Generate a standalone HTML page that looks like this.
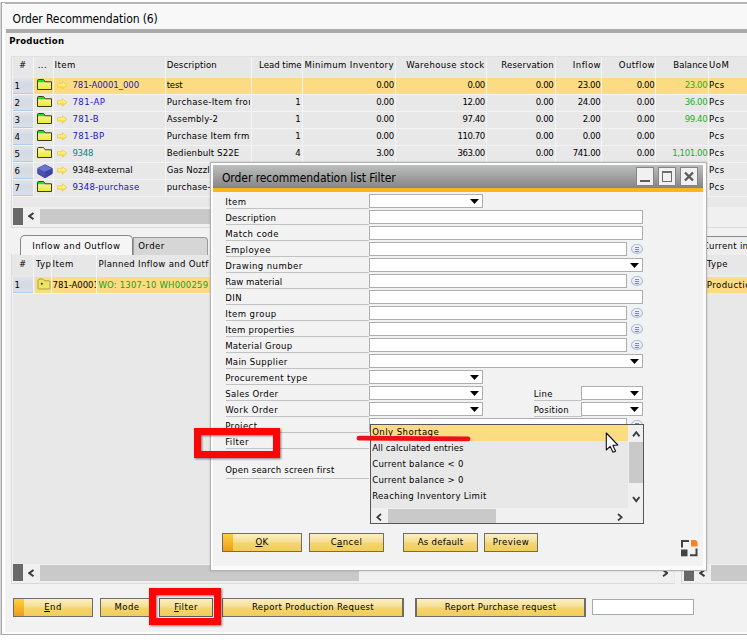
<!DOCTYPE html>
<html><head><meta charset="utf-8"><title>Order Recommendation</title>
<style>
html,body{margin:0;padding:0;background:#fff;}
body{width:747px;height:640px;position:relative;overflow:hidden;font-family:"DejaVu Sans Condensed","Liberation Sans",sans-serif;font-size:9.5px;color:#000;}
.a{position:absolute;box-sizing:border-box;}
.t{position:absolute;white-space:pre;}
.ic{position:absolute;}
.btn{position:absolute;height:19px;border:1px solid #6c6c6c;background:linear-gradient(#fdefc0 0%,#f5de92 47%,#f4d56e 53%,#f1cd5a 100%);box-sizing:border-box;}
.btn.def:before{content:"";position:absolute;left:0;top:0;bottom:0;width:10px;background:linear-gradient(#fcd23c,#f09a1c);}
.fld{position:absolute;height:14px;background:#fff;border:1px solid #adadad;box-sizing:border-box;}
.ul{position:absolute;height:1px;background:#c2c2c2;}
.dd{position:absolute;width:9px;height:5px;background:#000;clip-path:polygon(0 0,100% 0,50% 100%);}
.circ{position:absolute;width:12px;height:10px;border-radius:50%;border:1px solid #aebbdb;background:linear-gradient(#f6f8fd,#d6def1);box-sizing:border-box;}
.circ i{position:absolute;left:3px;right:3px;height:1px;background:#8a8a94;}
.num{position:absolute;width:21px;height:16px;background:linear-gradient(180deg,#e0e4ea,#d4d9e2 45%,#dadfe7);border-bottom:1px solid #aecbef;box-sizing:border-box;}
</style></head><body>
<svg width="0" height="0" style="position:absolute"><defs><linearGradient id="fg" x1="0" y1="0" x2="0" y2="1"><stop offset="0" stop-color="#f6f39a"/><stop offset="1" stop-color="#ecec28"/></linearGradient><linearGradient id="ag" x1="0" y1="0" x2="0" y2="1"><stop offset="0" stop-color="#fefc9e"/><stop offset="0.6" stop-color="#fbea62"/><stop offset="1" stop-color="#f0cc3c"/></linearGradient></defs></svg>

<div class="a" style="left:0px;top:0px;width:747px;height:640px;background:#fff;"></div>
<div class="a" style="left:0px;top:2px;width:760px;height:633px;background:#f2f2f2;border:1px solid #adadad;border-left:none;border-top:2px solid #b2b2b2;"></div>
<div class="a" style="left:0px;top:2px;width:2px;height:633px;background:#d6d6d6;border-right:1px solid #a8a8a8;"></div>
<div class="a" style="left:2px;top:3px;width:3px;height:631px;background:#ffffff;"></div>
<div class="a" style="left:2px;top:632px;width:745px;height:2px;background:#fcfcfc;"></div>
<div class="a" style="left:2px;top:4px;width:745px;height:25px;background:#f8f8f8;"></div>
<div class="a" style="left:2px;top:4px;width:745px;height:1px;background:#ffffff;"></div>
<div class="a" style="left:6px;top:29px;width:741px;height:4px;background:#ababab;"></div>
<div class="t" style="top:11.30px;line-height:16px;font-size:12px;letter-spacing:-0.101px;left:12.50px;">Order Recommendation (6)</div>
<div class="t" style="top:33.85px;line-height:14px;font-size:9.5px;letter-spacing:0.245px;font-weight:bold;left:9.20px;">Production</div>
<div class="a" style="left:11px;top:56px;width:740px;height:172px;background:#e8e8e8;border-left:1px solid #dadada;border-top:1px solid #e0e0e0;border-bottom:1px solid #dadada;"></div>
<div class="a" style="left:12px;top:57px;width:1px;height:170px;background:#f4f4f4;"></div>
<div class="a" style="left:13px;top:57px;width:734px;height:20px;background:#e7e7e7;"></div>
<div class="t" style="top:58.35px;line-height:14px;font-size:9.5px;letter-spacing:0.000px;left:18.91px;">#</div>
<div class="t" style="top:58.35px;line-height:14px;font-size:9.5px;letter-spacing:0.450px;left:37.70px;">...</div>
<div class="t" style="top:58.35px;line-height:14px;font-size:9.5px;letter-spacing:0.444px;left:54.50px;">Item</div>
<div class="t" style="top:58.35px;line-height:14px;font-size:9.5px;letter-spacing:0.136px;left:166.70px;">Description</div>
<div class="t" style="top:58.35px;line-height:14px;font-size:9.5px;letter-spacing:-0.006px;left:259.10px;">Lead time</div>
<div class="t" style="top:58.35px;line-height:14px;font-size:9.5px;letter-spacing:0.359px;left:304.60px;">Minimum Inventory</div>
<div class="t" style="top:58.35px;line-height:14px;font-size:9.5px;letter-spacing:0.362px;left:406.30px;">Warehouse stock</div>
<div class="t" style="top:58.35px;line-height:14px;font-size:9.5px;letter-spacing:0.173px;left:501.30px;">Reservation</div>
<div class="t" style="top:58.35px;line-height:14px;font-size:9.5px;letter-spacing:0.450px;left:572.80px;">Inflow</div>
<div class="t" style="top:58.35px;line-height:14px;font-size:9.5px;letter-spacing:0.450px;left:618.79px;">Outflow</div>
<div class="t" style="top:58.35px;line-height:14px;font-size:9.5px;letter-spacing:0.034px;left:673.30px;">Balance</div>
<div class="t" style="top:58.35px;line-height:14px;font-size:9.5px;letter-spacing:0.450px;left:709.00px;">UoM</div>
<div class="a" style="left:34px;top:78px;width:713px;height:16px;background:#fcdc82;"></div>
<div class="a" style="left:12px;top:94px;width:735px;height:1px;background:#f3f3f3;"></div>
<div class="num" style="left:13px;top:78px;"></div>
<div class="t" style="top:79.15px;line-height:14px;font-size:9.5px;letter-spacing:0.000px;left:14.40px;">1</div>
<svg class="ic" style="left:36px;top:78px" width="17" height="13" viewBox="0 0 17 13"><path d="M1.5 4 L1.5 2.6 Q1.5 1.5 2.6 1.5 L6.8 1.5 Q7.6 1.5 8.1 2.2 L9.2 3.8 L15.5 3.8 L15.5 11.5 L1.5 11.5 Z" fill="#22e222"/><path d="M1.5 4.2 L8.6 4.2 L9.2 3.8 L15.5 3.8 L15.5 11.5 L1.5 11.5 Z" fill="url(#fg)"/><path d="M1.5 4 L1.5 2.6 Q1.5 1.5 2.6 1.5 L6.8 1.5 Q7.6 1.5 8.1 2.2 L9.2 3.8 L15.5 3.8 L15.5 11.5 L1.5 11.5 Z" fill="none" stroke="#3c3c0c" stroke-width="1"/></svg>
<svg class="ic" style="left:56.7px;top:80.9px" width="11" height="9" viewBox="0 0 11 9"><path d="M0.5 2.7 L5.4 2.7 L5.4 0.7 L9.9 4.4 L5.4 8.1 L5.4 6.1 L0.5 6.1 Z" fill="url(#ag)" stroke="#eac640" stroke-width="0.7"/></svg>
<div class="t" style="top:78.15px;line-height:14px;font-size:9.5px;letter-spacing:-0.047px;color:#2218c0;left:72.40px;">781-A0001_000</div>
<div class="t" style="top:78.15px;line-height:14px;font-size:9.5px;letter-spacing:-0.207px;left:166.70px;width:83.80px;overflow:hidden;">test</div>
<div class="t" style="top:78.15px;line-height:14px;font-size:9.5px;letter-spacing:-0.390px;left:376.24px;">0.00</div>
<div class="t" style="top:78.15px;line-height:14px;font-size:9.5px;letter-spacing:-0.390px;left:467.44px;">0.00</div>
<div class="t" style="top:78.15px;line-height:14px;font-size:9.5px;letter-spacing:-0.390px;left:535.84px;">0.00</div>
<div class="t" style="top:78.15px;line-height:14px;font-size:9.5px;letter-spacing:-0.415px;left:577.79px;">23.00</div>
<div class="t" style="top:78.15px;line-height:14px;font-size:9.5px;letter-spacing:-0.390px;left:636.74px;">0.00</div>
<div class="t" style="top:78.15px;line-height:14px;font-size:9.5px;letter-spacing:-0.415px;color:#1cb01c;left:684.79px;">23.00</div>
<div class="t" style="top:78.15px;line-height:14px;font-size:9.5px;letter-spacing:0.450px;left:709.00px;">Pcs</div>
<div class="a" style="left:12px;top:111px;width:735px;height:1px;background:#f3f3f3;"></div>
<div class="num" style="left:13px;top:95px;"></div>
<div class="t" style="top:96.15px;line-height:14px;font-size:9.5px;letter-spacing:0.000px;left:14.40px;">2</div>
<svg class="ic" style="left:36px;top:95px" width="17" height="13" viewBox="0 0 17 13"><path d="M1.5 4 L1.5 2.6 Q1.5 1.5 2.6 1.5 L6.8 1.5 Q7.6 1.5 8.1 2.2 L9.2 3.8 L15.5 3.8 L15.5 11.5 L1.5 11.5 Z" fill="#22e222"/><path d="M1.5 4.2 L8.6 4.2 L9.2 3.8 L15.5 3.8 L15.5 11.5 L1.5 11.5 Z" fill="url(#fg)"/><path d="M1.5 4 L1.5 2.6 Q1.5 1.5 2.6 1.5 L6.8 1.5 Q7.6 1.5 8.1 2.2 L9.2 3.8 L15.5 3.8 L15.5 11.5 L1.5 11.5 Z" fill="none" stroke="#3c3c0c" stroke-width="1"/></svg>
<svg class="ic" style="left:56.7px;top:97.9px" width="11" height="9" viewBox="0 0 11 9"><path d="M0.5 2.7 L5.4 2.7 L5.4 0.7 L9.9 4.4 L5.4 8.1 L5.4 6.1 L0.5 6.1 Z" fill="url(#ag)" stroke="#eac640" stroke-width="0.7"/></svg>
<div class="t" style="top:95.15px;line-height:14px;font-size:9.5px;letter-spacing:0.450px;color:#2218c0;left:72.40px;">781-AP</div>
<div class="t" style="top:95.15px;line-height:14px;font-size:9.5px;letter-spacing:0.348px;left:166.70px;width:83.80px;overflow:hidden;">Purchase-Item from</div>
<div class="t" style="top:95.15px;line-height:14px;font-size:9.5px;letter-spacing:0.000px;left:295.16px;">1</div>
<div class="t" style="top:95.15px;line-height:14px;font-size:9.5px;letter-spacing:-0.390px;left:376.24px;">0.00</div>
<div class="t" style="top:95.15px;line-height:14px;font-size:9.5px;letter-spacing:-0.415px;left:462.49px;">12.00</div>
<div class="t" style="top:95.15px;line-height:14px;font-size:9.5px;letter-spacing:-0.390px;left:535.84px;">0.00</div>
<div class="t" style="top:95.15px;line-height:14px;font-size:9.5px;letter-spacing:-0.415px;left:577.79px;">24.00</div>
<div class="t" style="top:95.15px;line-height:14px;font-size:9.5px;letter-spacing:-0.390px;left:636.74px;">0.00</div>
<div class="t" style="top:95.15px;line-height:14px;font-size:9.5px;letter-spacing:-0.415px;color:#1cb01c;left:684.79px;">36.00</div>
<div class="t" style="top:95.15px;line-height:14px;font-size:9.5px;letter-spacing:0.450px;left:709.00px;">Pcs</div>
<div class="a" style="left:12px;top:128px;width:735px;height:1px;background:#f3f3f3;"></div>
<div class="num" style="left:13px;top:112px;"></div>
<div class="t" style="top:113.15px;line-height:14px;font-size:9.5px;letter-spacing:0.000px;left:14.40px;">3</div>
<svg class="ic" style="left:36px;top:112px" width="17" height="13" viewBox="0 0 17 13"><path d="M1.5 4 L1.5 2.6 Q1.5 1.5 2.6 1.5 L6.8 1.5 Q7.6 1.5 8.1 2.2 L9.2 3.8 L15.5 3.8 L15.5 11.5 L1.5 11.5 Z" fill="#22e222"/><path d="M1.5 4.2 L8.6 4.2 L9.2 3.8 L15.5 3.8 L15.5 11.5 L1.5 11.5 Z" fill="url(#fg)"/><path d="M1.5 4 L1.5 2.6 Q1.5 1.5 2.6 1.5 L6.8 1.5 Q7.6 1.5 8.1 2.2 L9.2 3.8 L15.5 3.8 L15.5 11.5 L1.5 11.5 Z" fill="none" stroke="#3c3c0c" stroke-width="1"/></svg>
<svg class="ic" style="left:56.7px;top:114.9px" width="11" height="9" viewBox="0 0 11 9"><path d="M0.5 2.7 L5.4 2.7 L5.4 0.7 L9.9 4.4 L5.4 8.1 L5.4 6.1 L0.5 6.1 Z" fill="url(#ag)" stroke="#eac640" stroke-width="0.7"/></svg>
<div class="t" style="top:112.15px;line-height:14px;font-size:9.5px;letter-spacing:0.345px;color:#2218c0;left:72.40px;">781-B</div>
<div class="t" style="top:112.15px;line-height:14px;font-size:9.5px;letter-spacing:0.193px;left:166.70px;width:83.80px;overflow:hidden;">Assembly-2</div>
<div class="t" style="top:112.15px;line-height:14px;font-size:9.5px;letter-spacing:0.000px;left:295.16px;">1</div>
<div class="t" style="top:112.15px;line-height:14px;font-size:9.5px;letter-spacing:-0.390px;left:376.24px;">0.00</div>
<div class="t" style="top:112.15px;line-height:14px;font-size:9.5px;letter-spacing:-0.415px;left:462.49px;">97.40</div>
<div class="t" style="top:112.15px;line-height:14px;font-size:9.5px;letter-spacing:-0.390px;left:535.84px;">0.00</div>
<div class="t" style="top:112.15px;line-height:14px;font-size:9.5px;letter-spacing:-0.390px;left:582.74px;">2.00</div>
<div class="t" style="top:112.15px;line-height:14px;font-size:9.5px;letter-spacing:-0.390px;left:636.74px;">0.00</div>
<div class="t" style="top:112.15px;line-height:14px;font-size:9.5px;letter-spacing:-0.415px;color:#1cb01c;left:684.79px;">99.40</div>
<div class="t" style="top:112.15px;line-height:14px;font-size:9.5px;letter-spacing:0.450px;left:709.00px;">Pcs</div>
<div class="a" style="left:12px;top:145px;width:735px;height:1px;background:#f3f3f3;"></div>
<div class="num" style="left:13px;top:129px;"></div>
<div class="t" style="top:130.15px;line-height:14px;font-size:9.5px;letter-spacing:0.000px;left:14.40px;">4</div>
<svg class="ic" style="left:36px;top:129px" width="17" height="13" viewBox="0 0 17 13"><path d="M1.5 4 L1.5 2.6 Q1.5 1.5 2.6 1.5 L6.8 1.5 Q7.6 1.5 8.1 2.2 L9.2 3.8 L15.5 3.8 L15.5 11.5 L1.5 11.5 Z" fill="#22e222"/><path d="M1.5 4.2 L8.6 4.2 L9.2 3.8 L15.5 3.8 L15.5 11.5 L1.5 11.5 Z" fill="url(#fg)"/><path d="M1.5 4 L1.5 2.6 Q1.5 1.5 2.6 1.5 L6.8 1.5 Q7.6 1.5 8.1 2.2 L9.2 3.8 L15.5 3.8 L15.5 11.5 L1.5 11.5 Z" fill="none" stroke="#3c3c0c" stroke-width="1"/></svg>
<svg class="ic" style="left:56.7px;top:131.9px" width="11" height="9" viewBox="0 0 11 9"><path d="M0.5 2.7 L5.4 2.7 L5.4 0.7 L9.9 4.4 L5.4 8.1 L5.4 6.1 L0.5 6.1 Z" fill="url(#ag)" stroke="#eac640" stroke-width="0.7"/></svg>
<div class="t" style="top:129.15px;line-height:14px;font-size:9.5px;letter-spacing:0.344px;color:#2218c0;left:72.40px;">781-BP</div>
<div class="t" style="top:129.15px;line-height:14px;font-size:9.5px;letter-spacing:0.263px;left:166.70px;width:83.80px;overflow:hidden;">Purchase Item frm</div>
<div class="t" style="top:129.15px;line-height:14px;font-size:9.5px;letter-spacing:0.000px;left:295.16px;">1</div>
<div class="t" style="top:129.15px;line-height:14px;font-size:9.5px;letter-spacing:-0.390px;left:376.24px;">0.00</div>
<div class="t" style="top:129.15px;line-height:14px;font-size:9.5px;letter-spacing:-0.430px;left:457.54px;">110.70</div>
<div class="t" style="top:129.15px;line-height:14px;font-size:9.5px;letter-spacing:-0.390px;left:535.84px;">0.00</div>
<div class="t" style="top:129.15px;line-height:14px;font-size:9.5px;letter-spacing:-0.390px;left:582.74px;">0.00</div>
<div class="t" style="top:129.15px;line-height:14px;font-size:9.5px;letter-spacing:-0.390px;left:636.74px;">0.00</div>
<div class="t" style="top:129.15px;line-height:14px;font-size:9.5px;letter-spacing:0.450px;left:709.00px;">Pcs</div>
<div class="a" style="left:12px;top:162px;width:735px;height:1px;background:#f3f3f3;"></div>
<div class="num" style="left:13px;top:146px;"></div>
<div class="t" style="top:147.15px;line-height:14px;font-size:9.5px;letter-spacing:0.000px;left:14.40px;">5</div>
<svg class="ic" style="left:36px;top:146px" width="17" height="13" viewBox="0 0 17 13"><path d="M1.5 4 L1.5 2.6 Q1.5 1.5 2.6 1.5 L6.8 1.5 Q7.6 1.5 8.1 2.2 L9.2 3.8 L15.5 3.8 L15.5 11.5 L1.5 11.5 Z" fill="#f6f2a0"/><path d="M1.5 4.2 L8.6 4.2 L9.2 3.8 L15.5 3.8 L15.5 11.5 L1.5 11.5 Z" fill="url(#fg)"/><path d="M1.5 4 L1.5 2.6 Q1.5 1.5 2.6 1.5 L6.8 1.5 Q7.6 1.5 8.1 2.2 L9.2 3.8 L15.5 3.8 L15.5 11.5 L1.5 11.5 Z" fill="none" stroke="#3c3c0c" stroke-width="1"/></svg>
<svg class="ic" style="left:56.7px;top:148.9px" width="11" height="9" viewBox="0 0 11 9"><path d="M0.5 2.7 L5.4 2.7 L5.4 0.7 L9.9 4.4 L5.4 8.1 L5.4 6.1 L0.5 6.1 Z" fill="url(#ag)" stroke="#eac640" stroke-width="0.7"/></svg>
<div class="t" style="top:146.15px;line-height:14px;font-size:9.5px;letter-spacing:-0.233px;color:#0a8484;left:72.40px;">9348</div>
<div class="t" style="top:146.15px;line-height:14px;font-size:9.5px;letter-spacing:0.140px;left:166.70px;width:83.80px;overflow:hidden;">Bedienbult S22E</div>
<div class="t" style="top:146.15px;line-height:14px;font-size:9.5px;letter-spacing:0.000px;left:295.16px;">4</div>
<div class="t" style="top:146.15px;line-height:14px;font-size:9.5px;letter-spacing:-0.390px;left:376.24px;">3.00</div>
<div class="t" style="top:146.15px;line-height:14px;font-size:9.5px;letter-spacing:-0.430px;left:457.54px;">363.00</div>
<div class="t" style="top:146.15px;line-height:14px;font-size:9.5px;letter-spacing:-0.390px;left:535.84px;">0.00</div>
<div class="t" style="top:146.15px;line-height:14px;font-size:9.5px;letter-spacing:-0.430px;left:572.84px;">741.00</div>
<div class="t" style="top:146.15px;line-height:14px;font-size:9.5px;letter-spacing:-0.390px;left:636.74px;">0.00</div>
<div class="t" style="top:146.15px;line-height:14px;font-size:9.5px;letter-spacing:-0.377px;color:#1cb01c;left:672.19px;">1,101.00</div>
<div class="t" style="top:146.15px;line-height:14px;font-size:9.5px;letter-spacing:0.450px;left:709.00px;">Pcs</div>
<div class="a" style="left:12px;top:179px;width:735px;height:1px;background:#f3f3f3;"></div>
<div class="num" style="left:13px;top:163px;"></div>
<div class="t" style="top:164.15px;line-height:14px;font-size:9.5px;letter-spacing:0.000px;left:14.40px;">6</div>
<svg class="ic" style="left:36.5px;top:164px" width="16" height="15" viewBox="0 0 16 15"><path d="M8 0.8 L15.2 4.4 L15.2 9.6 L8 13.8 L0.8 9.6 L0.8 4.4 Z" fill="#4a52b4" stroke="#343c98" stroke-width="0.9"/><path d="M0.8 4.4 L8 7.8 L15.2 4.4 L8 0.8 Z" fill="#6c74cc"/><path d="M8 7.8 L8 13.8 L15.2 9.6 L15.2 4.4 Z" fill="#3c44a4"/></svg>
<svg class="ic" style="left:56.7px;top:165.9px" width="11" height="9" viewBox="0 0 11 9"><path d="M0.5 2.7 L5.4 2.7 L5.4 0.7 L9.9 4.4 L5.4 8.1 L5.4 6.1 L0.5 6.1 Z" fill="url(#ag)" stroke="#eac640" stroke-width="0.7"/></svg>
<div class="t" style="top:163.15px;line-height:14px;font-size:9.5px;letter-spacing:0.028px;color:#000;left:72.40px;">9348-external</div>
<div class="t" style="top:163.15px;line-height:14px;font-size:9.5px;letter-spacing:0.115px;left:166.70px;width:83.80px;overflow:hidden;">Gas Nozzle</div>
<div class="t" style="top:163.15px;line-height:14px;font-size:9.5px;letter-spacing:0.450px;left:709.00px;">Pcs</div>
<div class="a" style="left:12px;top:196px;width:735px;height:1px;background:#f3f3f3;"></div>
<div class="num" style="left:13px;top:180px;"></div>
<div class="t" style="top:181.15px;line-height:14px;font-size:9.5px;letter-spacing:0.000px;left:14.40px;">7</div>
<svg class="ic" style="left:36px;top:180px" width="17" height="13" viewBox="0 0 17 13"><path d="M1.5 4 L1.5 2.6 Q1.5 1.5 2.6 1.5 L6.8 1.5 Q7.6 1.5 8.1 2.2 L9.2 3.8 L15.5 3.8 L15.5 11.5 L1.5 11.5 Z" fill="#22e222"/><path d="M1.5 4.2 L8.6 4.2 L9.2 3.8 L15.5 3.8 L15.5 11.5 L1.5 11.5 Z" fill="url(#fg)"/><path d="M1.5 4 L1.5 2.6 Q1.5 1.5 2.6 1.5 L6.8 1.5 Q7.6 1.5 8.1 2.2 L9.2 3.8 L15.5 3.8 L15.5 11.5 L1.5 11.5 Z" fill="none" stroke="#3c3c0c" stroke-width="1"/></svg>
<svg class="ic" style="left:56.7px;top:182.9px" width="11" height="9" viewBox="0 0 11 9"><path d="M0.5 2.7 L5.4 2.7 L5.4 0.7 L9.9 4.4 L5.4 8.1 L5.4 6.1 L0.5 6.1 Z" fill="url(#ag)" stroke="#eac640" stroke-width="0.7"/></svg>
<div class="t" style="top:180.15px;line-height:14px;font-size:9.5px;letter-spacing:0.229px;color:#1a10c0;left:72.40px;">9348-purchase</div>
<div class="t" style="top:180.15px;line-height:14px;font-size:9.5px;letter-spacing:0.211px;left:166.70px;width:83.80px;overflow:hidden;">purchase-Item</div>
<div class="t" style="top:180.15px;line-height:14px;font-size:9.5px;letter-spacing:0.450px;left:709.00px;">Pcs</div>
<div class="a" style="left:33px;top:57px;width:1px;height:140px;background:#f5f5f5;"></div>
<div class="a" style="left:53px;top:57px;width:1px;height:140px;background:#f5f5f5;"></div>
<div class="a" style="left:165px;top:57px;width:1px;height:140px;background:#f5f5f5;"></div>
<div class="a" style="left:251px;top:57px;width:1px;height:140px;background:#f5f5f5;"></div>
<div class="a" style="left:302px;top:57px;width:1px;height:140px;background:#f5f5f5;"></div>
<div class="a" style="left:395px;top:57px;width:1px;height:140px;background:#f5f5f5;"></div>
<div class="a" style="left:486px;top:57px;width:1px;height:140px;background:#f5f5f5;"></div>
<div class="a" style="left:555px;top:57px;width:1px;height:140px;background:#f5f5f5;"></div>
<div class="a" style="left:601px;top:57px;width:1px;height:140px;background:#f5f5f5;"></div>
<div class="a" style="left:655px;top:57px;width:1px;height:140px;background:#f5f5f5;"></div>
<div class="a" style="left:708px;top:57px;width:1px;height:140px;background:#f5f5f5;"></div>
<div class="a" style="left:12px;top:207px;width:735px;height:20px;background:#f0f0f0;"></div>
<div class="a" style="left:13px;top:208px;width:10px;height:17px;background:#686868;"></div>
<div class="a" style="left:40px;top:209px;width:600px;height:15px;background:#c9c9c9;"></div>
<svg class="ic" style="left:28px;top:212.3px" width="6.5" height="8.2" viewBox="0 0 6.5 8.2"><path d="M5.5 1 L1.2 4.1 L5.5 7.199999999999999" fill="none" stroke="#3c3c3c" stroke-width="2"/></svg>
<div class="a" style="left:11px;top:254px;width:664px;height:330px;background:#e8e8e8;border-left:1px solid #dadada;border-bottom:1px solid #dadada;"></div>
<div class="a" style="left:12px;top:254px;width:1px;height:329px;background:#f4f4f4;"></div>
<div class="a" style="left:681px;top:236px;width:80px;height:348px;background:#e8e8e8;border-left:1px solid #d4d4d4;border-bottom:1px solid #dadada;"></div>
<div class="a" style="left:133px;top:237px;width:75px;height:18px;background:#d6d6d6;border:1px solid #9a9a9a;border-bottom:none;border-radius:0 4px 0 0;"></div>
<div class="a" style="left:20px;top:235px;width:113px;height:20px;background:#f5f5f5;border:1px solid #868686;border-bottom:none;border-radius:5px 5px 0 0;"></div>
<div class="t" style="top:238.65px;line-height:14px;font-size:9.5px;letter-spacing:0.450px;left:32.20px;">Inflow and Outflow</div>
<div class="t" style="top:238.65px;line-height:14px;font-size:9.5px;letter-spacing:0.450px;left:138.20px;">Order</div>
<div class="a" style="left:12px;top:255px;width:662px;height:20px;background:#e7e7e7;"></div>
<div class="t" style="top:256.65px;line-height:14px;font-size:9.5px;letter-spacing:0.000px;left:18.91px;">#</div>
<div class="t" style="top:256.65px;line-height:14px;font-size:9.5px;letter-spacing:0.450px;left:35.70px;width:15.30px;overflow:hidden;">Type</div>
<div class="t" style="top:256.65px;line-height:14px;font-size:9.5px;letter-spacing:0.444px;left:52.50px;">Item</div>
<div class="t" style="top:256.65px;line-height:14px;font-size:9.5px;letter-spacing:0.326px;left:98.50px;width:110.00px;overflow:hidden;">Planned Inflow and Outflow</div>
<div class="a" style="left:35px;top:277px;width:639px;height:16px;background:#fcdc82;"></div>
<div class="num" style="left:13px;top:277px;"></div>
<div class="t" style="top:278.15px;line-height:14px;font-size:9.5px;letter-spacing:0.000px;left:14.40px;">1</div>
<svg class="ic" style="left:36.5px;top:277.5px" width="14" height="12" viewBox="0 0 14 12"><path d="M1 3 Q1 1 3 1 L5.2 1 Q6.4 1 7 2.2 L7.3 2.8 L12 2.8 Q13 2.8 13 3.8 L13 10 Q13 11 12 11 L2 11 Q1 11 1 10 Z" fill="#ece565" stroke="#a9a536" stroke-width="1"/><circle cx="4.8" cy="5.8" r="1" fill="#2c2c10"/></svg>
<div class="t" style="top:277.85px;line-height:14px;font-size:9.5px;letter-spacing:-0.047px;left:52.50px;width:43.50px;overflow:hidden;">781-A0001_000</div>
<div class="t" style="top:277.85px;line-height:14px;font-size:9.5px;letter-spacing:0.162px;color:#1aa01a;left:98.50px;">WO: 1307-10 WH000259</div>
<div class="a" style="left:33px;top:255px;width:1px;height:39px;background:#f5f5f5;"></div>
<div class="a" style="left:51px;top:255px;width:1px;height:39px;background:#f5f5f5;"></div>
<div class="a" style="left:96px;top:255px;width:1px;height:39px;background:#f5f5f5;"></div>
<div class="a" style="left:12px;top:293px;width:662px;height:1px;background:#f3f3f3;"></div>
<div class="a" style="left:700px;top:236px;width:47px;height:1px;background:#8a8a8a;"></div>
<div class="a" style="left:700px;top:237px;width:47px;height:18px;background:#eeeeee;"></div>
<div class="a" style="left:700px;top:255px;width:47px;height:20px;background:#e7e7e7;"></div>
<div class="a" style="left:700px;top:275px;width:47px;height:2px;background:#ececec;"></div>
<div class="a" style="left:700px;top:277px;width:47px;height:16px;background:#fcdc82;"></div>
<div class="t" style="top:239.15px;line-height:14px;font-size:9.5px;letter-spacing:0.302px;left:702.70px;">Current in</div>
<div class="t" style="top:257.15px;line-height:14px;font-size:9.5px;letter-spacing:0.450px;left:706.80px;">Type</div>
<div class="t" style="top:277.85px;line-height:14px;font-size:9.5px;letter-spacing:0.450px;left:706.80px;">Production</div>
<div class="a" style="left:12px;top:564px;width:662px;height:19px;background:#f0f0f0;"></div>
<div class="a" style="left:13px;top:564px;width:10px;height:17px;background:#686868;"></div>
<div class="a" style="left:40px;top:565px;width:319px;height:16px;background:#c9c9c9;"></div>
<svg class="ic" style="left:28px;top:568.7px" width="6.5" height="8.2" viewBox="0 0 6.5 8.2"><path d="M5.5 1 L1.2 4.1 L5.5 7.199999999999999" fill="none" stroke="#3c3c3c" stroke-width="2"/></svg>
<svg class="ic" style="left:661.5px;top:569.4px" width="6.5" height="8.2" viewBox="0 0 6.5 8.2"><path d="M1 1 L5.3 4.1 L1 7.199999999999999" fill="none" stroke="#3c3c3c" stroke-width="2"/></svg>
<div class="a" style="left:682px;top:564px;width:70px;height:19px;background:#f0f0f0;"></div>
<div class="a" style="left:684px;top:564px;width:10px;height:17px;background:#686868;"></div>
<svg class="ic" style="left:698.8px;top:569.4px" width="6.5" height="8.2" viewBox="0 0 6.5 8.2"><path d="M5.5 1 L1.2 4.1 L5.5 7.199999999999999" fill="none" stroke="#3c3c3c" stroke-width="2"/></svg>
<div class="a" style="left:711px;top:565px;width:40px;height:16px;background:#c9c9c9;"></div>
<div class="btn def" style="left:13px;top:598px;width:80px;"></div><div class="t" style="top:600.15px;line-height:14px;font-size:9.5px;letter-spacing:0.450px;left:44.19px;"><u>E</u>nd</div>
<div class="btn" style="left:100px;top:598px;width:54px;"></div><div class="t" style="top:600.15px;line-height:14px;font-size:9.5px;letter-spacing:0.450px;left:114.45px;">Mode</div>
<div class="btn" style="left:159px;top:598px;width:54px;border-color:#5c5c5c;"></div><div class="t" style="top:600.15px;line-height:14px;font-size:9.5px;letter-spacing:0.438px;left:174.13px;"><u>F</u>ilter</div>
<div class="btn" style="left:222px;top:598px;width:182px;border-right:2px solid #6c6c6c;"></div><div class="t" style="top:600.15px;line-height:14px;font-size:9.5px;letter-spacing:0.328px;left:251.99px;">Report Production Request</div>
<div class="btn" style="left:415px;top:598px;width:171px;border-right:2px solid #6c6c6c;border-left:2px solid #6c6c6c;"></div><div class="t" style="top:600.15px;line-height:14px;font-size:9.5px;letter-spacing:0.288px;left:444.71px;">Report Purchase request</div>
<div class="fld" style="left:592px;top:599px;width:102px;height:16px;border-color:#a6a8b4;"></div>
<div class="a" style="left:210px;top:162px;width:497px;height:409px;background:#fbfbfb;border:1px solid #b2b2b2;box-shadow:0 0 2px rgba(0,0,0,.18);"></div>
<div class="a" style="left:213px;top:165px;width:490px;height:401px;background:#f2f2f2;"></div>
<div class="a" style="left:213px;top:165px;width:490px;height:23px;background:linear-gradient(#bdbebe,#8a8a8a 92%,#7c8088);"></div>
<div class="a" style="left:213px;top:188px;width:490px;height:4px;background:#fbb61a;"></div>
<div class="t" style="top:169.70px;line-height:16px;font-size:12px;letter-spacing:-0.054px;left:221.90px;">Order recommendation list Filter</div>
<div class="a" style="left:636px;top:167px;width:18px;height:19px;background:#f1f1f1;border:1px solid #848484;"></div>
<div class="a" style="left:658px;top:167px;width:18px;height:19px;background:#f1f1f1;border:1px solid #848484;"></div>
<div class="a" style="left:680px;top:167px;width:18px;height:19px;background:#f1f1f1;border:1px solid #848484;"></div>
<div class="a" style="left:640px;top:180px;width:10px;height:2px;background:#5c5c5c;"></div>
<div class="a" style="left:662px;top:171px;width:10px;height:11px;background:transparent;border:1px solid #6c6c6c;border-top-width:2px;"></div>
<svg class="ic" style="left:683px;top:171px" width="12" height="11" viewBox="0 0 12 11"><path d="M2 1.5 L10 9.5 M10 1.5 L2 9.5" stroke="#5c5c5c" stroke-width="2.4"/></svg>
<div class="t" style="top:195.35px;line-height:14px;font-size:9.5px;letter-spacing:0.444px;left:225.20px;">Item</div>
<div class="ul" style="left:226px;top:208px;width:143px;"></div>
<div class="fld" style="left:369px;top:194px;width:114px;"></div><div class="dd" style="left:470px;top:199px;"></div>
<div class="t" style="top:211.35px;line-height:14px;font-size:9.5px;letter-spacing:0.211px;left:225.20px;">Description</div>
<div class="ul" style="left:226px;top:224px;width:143px;"></div>
<div class="fld" style="left:369px;top:210px;width:274px;"></div>
<div class="t" style="top:227.35px;line-height:14px;font-size:9.5px;letter-spacing:0.431px;left:225.20px;">Match code</div>
<div class="ul" style="left:226px;top:240px;width:143px;"></div>
<div class="fld" style="left:369px;top:226px;width:274px;"></div>
<div class="t" style="top:243.35px;line-height:14px;font-size:9.5px;letter-spacing:0.422px;left:225.20px;">Employee</div>
<div class="ul" style="left:226px;top:256px;width:143px;"></div>
<div class="fld" style="left:369px;top:242px;width:258px;"></div>
<div class="circ" style="left:631px;top:244px;"><i style="top:1.5px"></i><i style="top:3.5px"></i><i style="top:5.5px"></i></div>
<div class="t" style="top:259.35px;line-height:14px;font-size:9.5px;letter-spacing:0.417px;left:225.20px;">Drawing number</div>
<div class="ul" style="left:226px;top:272px;width:143px;"></div>
<div class="fld" style="left:369px;top:258px;width:274px;"></div><div class="dd" style="left:630px;top:263px;"></div>
<div class="t" style="top:275.35px;line-height:14px;font-size:9.5px;letter-spacing:0.064px;left:225.20px;">Raw material</div>
<div class="ul" style="left:226px;top:288px;width:143px;"></div>
<div class="fld" style="left:369px;top:274px;width:258px;"></div>
<div class="circ" style="left:631px;top:276px;"><i style="top:1.5px"></i><i style="top:3.5px"></i><i style="top:5.5px"></i></div>
<div class="t" style="top:291.35px;line-height:14px;font-size:9.5px;letter-spacing:0.450px;left:225.20px;">DIN</div>
<div class="ul" style="left:226px;top:304px;width:143px;"></div>
<div class="fld" style="left:369px;top:290px;width:274px;"></div>
<div class="t" style="top:307.35px;line-height:14px;font-size:9.5px;letter-spacing:0.450px;left:225.20px;">Item group</div>
<div class="ul" style="left:226px;top:320px;width:143px;"></div>
<div class="fld" style="left:369px;top:306px;width:258px;"></div>
<div class="circ" style="left:631px;top:308px;"><i style="top:1.5px"></i><i style="top:3.5px"></i><i style="top:5.5px"></i></div>
<div class="t" style="top:323.35px;line-height:14px;font-size:9.5px;letter-spacing:0.235px;left:225.20px;">Item properties</div>
<div class="ul" style="left:226px;top:336px;width:143px;"></div>
<div class="fld" style="left:369px;top:322px;width:258px;"></div>
<div class="circ" style="left:631px;top:324px;"><i style="top:1.5px"></i><i style="top:3.5px"></i><i style="top:5.5px"></i></div>
<div class="t" style="top:339.35px;line-height:14px;font-size:9.5px;letter-spacing:0.278px;left:225.20px;">Material Group</div>
<div class="ul" style="left:226px;top:352px;width:143px;"></div>
<div class="fld" style="left:369px;top:338px;width:258px;"></div>
<div class="circ" style="left:631px;top:340px;"><i style="top:1.5px"></i><i style="top:3.5px"></i><i style="top:5.5px"></i></div>
<div class="t" style="top:355.35px;line-height:14px;font-size:9.5px;letter-spacing:0.309px;left:225.20px;">Main Supplier</div>
<div class="ul" style="left:226px;top:368px;width:143px;"></div>
<div class="fld" style="left:369px;top:354px;width:274px;"></div><div class="dd" style="left:630px;top:359px;"></div>
<div class="t" style="top:371.35px;line-height:14px;font-size:9.5px;letter-spacing:0.379px;left:225.20px;">Procurement type</div>
<div class="ul" style="left:226px;top:384px;width:143px;"></div>
<div class="fld" style="left:369px;top:370px;width:114px;"></div><div class="dd" style="left:470px;top:375px;"></div>
<div class="t" style="top:387.35px;line-height:14px;font-size:9.5px;letter-spacing:0.305px;left:225.20px;">Sales Order</div>
<div class="ul" style="left:226px;top:400px;width:143px;"></div>
<div class="fld" style="left:369px;top:386px;width:114px;"></div><div class="dd" style="left:470px;top:391px;"></div>
<div class="t" style="top:403.35px;line-height:14px;font-size:9.5px;letter-spacing:0.450px;left:225.20px;">Work Order</div>
<div class="ul" style="left:226px;top:416px;width:143px;"></div>
<div class="fld" style="left:369px;top:402px;width:114px;"></div><div class="dd" style="left:470px;top:407px;"></div>
<div class="t" style="top:419.35px;line-height:14px;font-size:9.5px;letter-spacing:0.450px;left:225.20px;">Project</div>
<div class="ul" style="left:226px;top:432px;width:143px;"></div>
<div class="fld" style="left:369px;top:418px;width:258px;"></div>
<div class="circ" style="left:631px;top:420px;"><i style="top:1.5px"></i><i style="top:3.5px"></i><i style="top:5.5px"></i></div>
<div class="t" style="top:435.35px;line-height:14px;font-size:9.5px;letter-spacing:0.438px;left:225.20px;">Filter</div>
<div class="ul" style="left:226px;top:448px;width:143px;"></div>
<div class="t" style="top:387.35px;line-height:14px;font-size:9.5px;letter-spacing:0.329px;left:533.70px;">Line</div><div class="ul" style="left:534px;top:400px;width:48px;"></div>
<div class="t" style="top:403.35px;line-height:14px;font-size:9.5px;letter-spacing:0.257px;left:533.70px;">Position</div><div class="ul" style="left:534px;top:416px;width:48px;"></div>
<div class="fld" style="left:581px;top:386px;width:62px;"></div><div class="dd" style="left:630px;top:391px;"></div>
<div class="fld" style="left:581px;top:402px;width:62px;"></div><div class="dd" style="left:630px;top:407px;"></div>
<div class="t" style="top:462.85px;line-height:14px;font-size:9.5px;letter-spacing:0.201px;left:225.20px;">Open search screen first</div><div class="ul" style="left:226px;top:478px;width:143px;"></div>
<div class="a" style="left:370px;top:424px;width:274px;height:100px;background:#e8e8e8;border:1px solid #565656;"></div>
<div class="a" style="left:371px;top:425px;width:257px;height:16px;background:#fcdc82;"></div>
<div class="t" style="top:424.75px;line-height:14px;font-size:9.5px;letter-spacing:0.450px;left:372.20px;">Only Shortage</div>
<div class="t" style="top:440.75px;line-height:14px;font-size:9.5px;letter-spacing:0.075px;left:372.20px;">All calculated entries</div>
<div class="t" style="top:456.75px;line-height:14px;font-size:9.5px;letter-spacing:0.268px;left:372.20px;">Current balance &lt; 0</div>
<div class="t" style="top:472.75px;line-height:14px;font-size:9.5px;letter-spacing:0.268px;left:372.20px;">Current balance &gt; 0</div>
<div class="t" style="top:488.75px;line-height:14px;font-size:9.5px;letter-spacing:0.316px;left:372.20px;">Reaching Inventory Limit</div>
<div class="a" style="left:628px;top:425px;width:15px;height:83px;background:#f0f0f0;"></div>
<div class="a" style="left:629px;top:442px;width:14px;height:41px;background:#c9c9c9;"></div>
<svg class="ic" style="left:632.3px;top:430.8px" width="8.5" height="6.4" viewBox="0 0 8.5 6.4"><path d="M1 5.4 L4.25 1.2 L7.5 5.4" fill="none" stroke="#3c3c3c" stroke-width="1.9"/></svg>
<svg class="ic" style="left:632.3px;top:496.2px" width="8.5" height="6.4" viewBox="0 0 8.5 6.4"><path d="M1 1 L4.25 5.2 L7.5 1" fill="none" stroke="#3c3c3c" stroke-width="1.9"/></svg>
<div class="a" style="left:371px;top:508px;width:272px;height:15px;background:#f0f0f0;"></div>
<div class="a" style="left:388px;top:509px;width:108px;height:14px;background:#c9c9c9;"></div>
<svg class="ic" style="left:375.8px;top:512.5px" width="6" height="8.5" viewBox="0 0 6 8.5"><path d="M5 1 L1.2 4.25 L5 7.5" fill="none" stroke="#3c3c3c" stroke-width="1.7"/></svg>
<svg class="ic" style="left:616.8px;top:512.5px" width="6" height="8.5" viewBox="0 0 6 8.5"><path d="M1 1 L4.8 4.25 L1 7.5" fill="none" stroke="#3c3c3c" stroke-width="1.7"/></svg>
<div class="btn def" style="left:222px;top:533px;width:80px;"></div><div class="t" style="top:535.15px;line-height:14px;font-size:9.5px;letter-spacing:0.450px;left:255.38px;"><u>O</u>K</div>
<div class="btn" style="left:309px;top:533px;width:75px;"></div><div class="t" style="top:535.15px;line-height:14px;font-size:9.5px;letter-spacing:0.450px;left:330.65px;">C<u>a</u>ncel</div>
<div class="btn" style="left:403px;top:533px;width:75px;"></div><div class="t" style="top:535.15px;line-height:14px;font-size:9.5px;letter-spacing:0.245px;left:417.73px;">As default</div>
<div class="btn" style="left:484px;top:533px;width:54px;"></div><div class="t" style="top:535.15px;line-height:14px;font-size:9.5px;letter-spacing:0.450px;left:492.81px;">Preview</div>
<svg class="ic" style="left:680.5px;top:539.5px" width="17" height="17" viewBox="0 0 17 17"><path d="M0 0 L8 0 L8 2 L2 2 L2 7.5 L0 7.5 Z" fill="#434343"/><path d="M10 0 L13.5 0 Q16.5 0 16.5 3 L16.5 6.5 L10 6.5 Z" fill="#f58320"/><rect x="0" y="9.5" width="6.5" height="6.8" fill="#434343"/><path d="M16.5 8.5 L16.5 16.3 L9 16.3 L9 14.3 L14.5 14.3 L14.5 8.5 Z" fill="#434343"/></svg>
<div class="a" style="left:194px;top:428px;width:86px;height:30px;background:transparent;border:7px solid #fb0505;filter:drop-shadow(1.5px 1.5px 1.3px rgba(0,0,0,.5));"></div>
<div class="a" style="left:149px;top:588px;width:72px;height:37px;background:transparent;border:7px solid #fb0505;filter:drop-shadow(1.5px 1.5px 1.3px rgba(0,0,0,.5));"></div>
<svg class="ic" style="left:355px;top:434px" width="118" height="9" viewBox="0 0 118 9"><path d="M4 4.2 L113 4.9" stroke="#ee0f1c" stroke-width="4.8" stroke-linecap="round" fill="none"/></svg>
<svg class="ic" style="left:605.2px;top:431.9px" width="15" height="23" viewBox="0 0 15 23"><path d="M1.3 1 L1.3 18 L5.2 14.4 L8 20.3 L10.6 19.2 L7.9 13.4 L12.8 13 Z" fill="#fff" stroke="#101018" stroke-width="1.1" stroke-linejoin="round"/></svg>
</body></html>
